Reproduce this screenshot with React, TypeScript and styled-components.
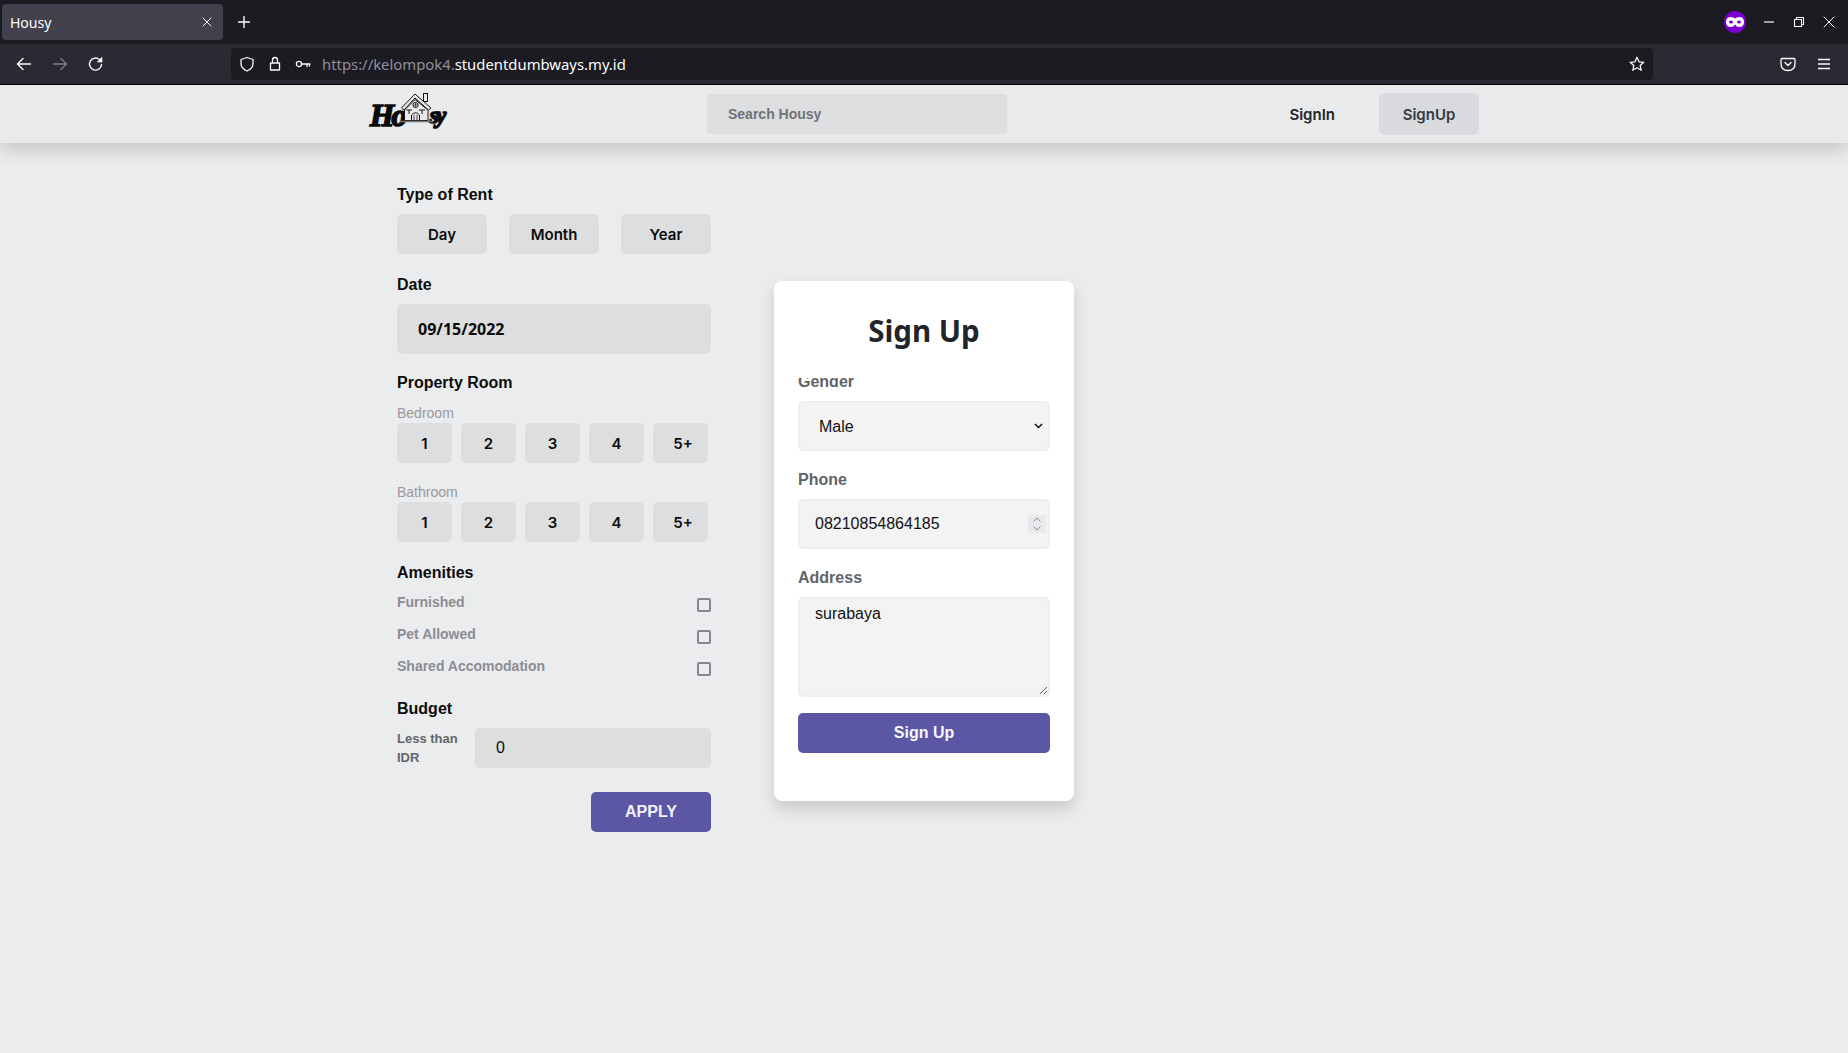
import React from 'react';
import styled, { createGlobalStyle } from 'styled-components';

const GlobalStyle = createGlobalStyle`
  html, body {
    margin: 0;
    padding: 0;
    height: 100%;
    overflow: hidden;
    background-color: #ebecee;
    font-family: "Liberation Sans", Arial, sans-serif;
  }
  * { box-sizing: border-box; }
`;

const CHROME_FONT = '"Noto Sans", "Open Sans", sans-serif';
const BUTTON_FONT = 'Inter, "Noto Sans", sans-serif';

/* browser frame */
const TabStrip = styled.div`
  height: 44px;
  background-color: #1c1b22;
  display: flex;
  align-items: center;
  padding-left: 2px;
  color: #fbfbfe;
`;

const Tab = styled.div`
  width: 221px;
  height: 36px;
  background-color: #42414d;
  border-radius: 4px;
  display: flex;
  align-items: center;
  justify-content: space-between;
  padding: 0 11px 0 8px;
  font-family: ${CHROME_FONT};
  font-size: 14px;
`;

const NewTab = styled.div`
  margin-left: 14px;
  display: flex;
`;

const WindowControls = styled.div`
  margin-left: auto;
  display: flex;
  align-items: center;
  padding-right: 12px;
  gap: 16px;
`;

const PrivateMask = styled.div`
  width: 22px;
  height: 22px;
  border-radius: 50%;
  background-color: #7b00d0;
  display: flex;
  align-items: center;
  justify-content: center;
`;

const Toolbar = styled.div`
  height: 41px;
  background-color: #2b2a33;
  border-bottom: 1px solid #000;
  display: flex;
  align-items: center;
  padding: 0 17px 1px 15px;
  color: #fbfbfe;
`;

const NavIcons = styled.div`
  display: flex;
  align-items: center;
  gap: 18px;
  width: 216px;
`;

const UrlBar = styled.div`
  width: 1422px;
  height: 32px;
  background-color: #1c1b22;
  border-radius: 4px;
  display: flex;
  align-items: center;
  padding: 0 8px;
`;

const UrlIcons = styled.div`
  display: flex;
  align-items: center;
  gap: 13px;
  margin-right: 11px;
`;

const UrlText = styled.div`
  font-family: ${CHROME_FONT};
  font-size: 14.85px;
  color: #fbfbfe;
  flex: 1;
`;

const UrlMuted = styled.span`
  color: #8f8f9d;
`;

const ToolbarRight = styled.div`
  margin-left: auto;
  display: flex;
  align-items: center;
  gap: 21px;
`;

/* site navbar */
const NavBar = styled.nav`
  height: 58px;
  background-color: #e9eaec;
  box-shadow: 0 8px 16px rgba(0, 0, 0, 0.15);
  display: flex;
  align-items: center;
  padding: 0 369px 0 370px;
  position: relative;
`;

const LogoSlot = styled.div`
  width: 337px;
  display: flex;
`;

const Logo = styled.div`
  display: flex;
  align-items: flex-end;
  height: 38px;
  margin-bottom: 5px;
  color: #0a0a0a;
`;

const LogoText = styled.span<{ $size: number }>`
  font-family: "Liberation Serif", serif;
  font-weight: 700;
  font-style: italic;
  font-size: ${p => p.$size}px;
  line-height: 30px;
  letter-spacing: -2.5px;
  -webkit-text-stroke: 1.6px #0a0a0a;
`;

const LogoHouse = styled.svg`
  margin: 0 -4px 0 -5px;
  position: relative;
  align-self: flex-start;
`;

const Search = styled.input`
  width: 300px;
  height: 40px;
  border: none;
  outline: none;
  border-radius: 4px;
  background-color: #dddee0;
  padding: 0 21px;
  font-family: "Liberation Sans", sans-serif;
  font-size: 14px;
  font-weight: 700;

  &::placeholder {
    color: #6f7276;
    opacity: 1;
  }
`;

const NavLinks = styled.div`
  margin-left: auto;
  display: flex;
  align-items: center;
  gap: 44px;
`;

const NavLink = styled.a`
  font-family: ${BUTTON_FONT};
  font-size: 15px;
  font-weight: 600;
  color: #212529;
`;

const NavButton = styled.button`
  width: 100px;
  height: 42px;
  border: none;
  border-radius: 6px;
  background-color: #d8dade;
  font-family: ${BUTTON_FONT};
  font-size: 15px;
  font-weight: 600;
  color: #343a40;
`;

/* page */
const Main = styled.main`
  display: flex;
  align-items: flex-start;
  padding: 39px 0 0 397px;
  gap: 63px;
`;

const Filter = styled.form`
  width: 314px;
  display: flex;
  flex-direction: column;
`;

const SectionTitle = styled.div<{ $top?: number }>`
  height: 24px;
  font-size: 16px;
  font-weight: 700;
  line-height: 26px;
  color: #0c0c0c;
  margin-top: ${p => p.$top ?? 0}px;
`;

const Choices = styled.div<{ $gap: number }>`
  display: flex;
  gap: ${p => p.$gap}px;
  margin-top: 8px;
`;

const Choice = styled.button<{ $width: number; $wide?: boolean }>`
  width: ${p => p.$width}px;
  height: 40px;
  border: none;
  border-radius: 5px;
  background-color: #dddee0;
  font-family: ${BUTTON_FONT};
  font-size: 15px;
  font-weight: 600;
  color: #0c0c0c;
  padding: 1px 0 0 ${p => (p.$wide ? 5 : 0)}px;
`;

const DateField = styled.input`
  width: 100%;
  height: 50px;
  margin-top: 8px;
  border: none;
  outline: none;
  border-radius: 5px;
  background-color: #dddee0;
  padding: 0 21px;
  font-family: "Noto Sans", sans-serif;
  font-size: 16px;
  font-weight: 700;
  color: #0c0c0c;
`;

const SubTitle = styled.div<{ $top: number }>`
  font-size: 14px;
  line-height: 20px;
  height: 20px;
  color: #98999d;
  margin-top: ${p => p.$top}px;
`;

const RoomChoices = styled(Choices)`
  margin-top: 0;
`;

const CheckRow = styled.label<{ $top?: number }>`
  display: flex;
  justify-content: space-between;
  align-items: flex-start;
  height: 32px;
  margin-top: ${p => p.$top ?? 0}px;
  font-size: 14px;
  font-weight: 700;
  line-height: 26px;
  color: #8b8d93;
`;

const Check = styled.input`
  appearance: none;
  width: 14px;
  height: 14px;
  margin: 9px 0 0;
  background-color: #ebecee;
  border: 2px solid #85858f;
  border-radius: 2px;
`;

const BudgetRow = styled.div`
  display: flex;
  align-items: center;
  margin-top: 8px;
`;

const BudgetLabel = styled.div`
  width: 78px;
  font-size: 13px;
  font-weight: 700;
  line-height: 19px;
  color: #63666b;
`;

const BudgetField = styled.input`
  width: 236px;
  height: 40px;
  border: none;
  outline: none;
  border-radius: 5px;
  background-color: #dddee0;
  padding: 0 21px;
  font-family: "Liberation Sans", sans-serif;
  font-size: 16px;
  color: #0c0c0c;
`;

const ApplyButton = styled.button`
  align-self: flex-end;
  width: 120px;
  height: 40px;
  margin-top: 24px;
  border: none;
  border-radius: 5px;
  background-color: #5c57a5;
  color: #f2f2f8;
  font-family: "Liberation Sans", sans-serif;
  font-size: 16px;
  font-weight: 700;
`;

/* sign up modal */
const Card = styled.section`
  width: 300px;
  height: 520px;
  margin-top: 99px;
  padding: 24px 24px 48px;
  background-color: #fff;
  border-radius: 8px;
  box-shadow: 0 8px 16px rgba(0, 0, 0, 0.15);
  display: flex;
  flex-direction: column;
`;

const CardTitle = styled.h2`
  margin: 0 0 19px;
  height: 54px;
  flex-shrink: 0;
  font-family: "Noto Sans", sans-serif;
  font-size: 29.5px;
  font-weight: 700;
  line-height: 52px;
  text-align: center;
  color: #212529;
`;

const CardBody = styled.div`
  height: 375px;
  flex-shrink: 0;
  overflow: hidden;
  display: flex;
  flex-direction: column;
  justify-content: flex-end;
`;

const FieldLabel = styled.label<{ $top?: number }>`
  display: block;
  flex-shrink: 0;
  height: 24px;
  margin: ${p => p.$top ?? 0}px 0 8px;
  font-size: 16px;
  font-weight: 700;
  line-height: 26px;
  color: #5f646b;
`;

const fieldBase = `
  width: 100%;
  flex-shrink: 0;
  border: 2px solid #eeeeee;
  border-radius: 5px;
  background-color: #f3f3f3;
  outline: none;
  font-family: "Liberation Sans", sans-serif;
  font-size: 16px;
  color: #111;
`;

const FieldBox = styled.div`
  position: relative;
  flex-shrink: 0;
`;

const SelectField = styled.select`
  ${fieldBase}
  display: block;
  height: 50px;
  appearance: none;
  padding: 0 19px;
`;

const SelectArrow = styled.svg`
  position: absolute;
  right: 7px;
  top: 22px;
  pointer-events: none;
`;

const PhoneField = styled.input`
  ${fieldBase}
  display: block;
  height: 50px;
  padding: 0 15px;
`;

const Spinner = styled.svg`
  position: absolute;
  right: 4px;
  top: 16px;
  background-color: #e9e9ed;
`;

const AddressField = styled.textarea`
  ${fieldBase}
  display: block;
  height: 100px;
  padding: 5px 15px;
  line-height: 20px;
  resize: vertical;
`;

const SubmitButton = styled.button`
  width: 100%;
  height: 40px;
  flex-shrink: 0;
  margin-top: 16px;
  border: none;
  border-radius: 5px;
  background-color: #5c57a5;
  color: #f5f5fa;
  font-family: "Liberation Sans", sans-serif;
  font-size: 16px;
  font-weight: 700;
`;

const Ico: React.FC<{ w?: number; h?: number; children: React.ReactNode; op?: number }> = ({ w = 16, h = 16, children, op = 1 }) => (
  <svg width={w} height={h} viewBox={`0 0 ${w} ${h}`} fill="none" stroke="currentColor" strokeWidth={1.3} strokeLinecap="round" strokeLinejoin="round" opacity={op}>
    {children}
  </svg>
);

const HouseIcon = () => (
  <LogoHouse width="34" height="31" viewBox="0 0 34 31" fill="#e9eaec" stroke="#151515" strokeWidth="1">
    <rect x="23.5" y="0.5" width="4" height="8" />
    <path d="M1.5 15 L15 1 L31 15 L28.5 17 L15 5 L4 17 Z" />
    <path d="M4.5 17 L15 6.5 L28 17 V27.5 H4.5 Z" />
    <circle cx="15.5" cy="12" r="2.6" />
    <path d="M13.5 12 H17.5 M15.5 10 V14" strokeWidth="0.7" />
    <path d="M6.5 17 H12 M9 17 V21 M19 17 H25 M22 17 V21" />
    <path d="M11.5 27.5 V22 Q15.5 17.5 19.5 22 V27.5 Z" />
    <path d="M14 27.5 V22 M17 27.5 V22" strokeWidth="0.8" />
    <path d="M0 28.5 H33" strokeWidth="1.3" stroke="#777" />
  </LogoHouse>
);

const App: React.FC = () => {
  return (
    <>
      <GlobalStyle />
      <TabStrip>
        <Tab>
          Housy
          <Ico w={10} h={10}><path d="M1 1 L9 9 M9 1 L1 9" strokeWidth="1" /></Ico>
        </Tab>
        <NewTab>
          <Ico w={14} h={14}><path d="M7 1.5 V12.5 M1.5 7 H12.5" strokeWidth="1.4" /></Ico>
        </NewTab>
        <WindowControls>
          <PrivateMask>
            <svg width="18" height="10" viewBox="0 0 18 10">
              <path fillRule="evenodd" fill="#fff" d="M5 0 Q7.5 0 9 1.5 Q10.5 0 13 0 Q18 0 18 5 Q18 10 13 10 Q10.5 10 9 7.5 Q7.5 10 5 10 Q0 10 0 5 Q0 0 5 0 Z M5 3.5 Q3 3.5 3 5 Q3 6.5 5 6.5 Q7 6.5 7 5 Q7 3.5 5 3.5 Z M13 3.5 Q11 3.5 11 5 Q11 6.5 13 6.5 Q15 6.5 15 5 Q15 3.5 13 3.5 Z" />
            </svg>
          </PrivateMask>
          <Ico w={14} h={12}><path d="M2 6 H12" strokeWidth="1.2" strokeLinecap="butt" /></Ico>
          <Ico w={14} h={12}><path d="M4.5 3 V1.5 H11.5 V8.5 H10 M2.5 3.5 H9.5 V10.5 H2.5 Z" strokeWidth="1.1" /></Ico>
          <Ico w={14} h={12}><path d="M2 1 L12 11 M12 1 L2 11" strokeWidth="1" /></Ico>
        </WindowControls>
      </TabStrip>
      <Toolbar>
        <NavIcons>
          <Ico w={18} h={16}><path d="M15.5 8 H3 M8 2.5 L2.5 8 L8 13.5" strokeWidth="1.4" /></Ico>
          <Ico w={18} h={16} op={0.4}><path d="M2.5 8 H15 M10 2.5 L15.5 8 L10 13.5" strokeWidth="1.4" /></Ico>
          <Ico w={18} h={16}><path d="M14.5 8.5 A6 6 0 1 1 12.5 3.6 L14.5 5.4" strokeWidth="1.4" /><path d="M15 1.5 V6 H10.5 Z" fill="currentColor" strokeWidth="0.6" /></Ico>
        </NavIcons>
        <UrlBar>
          <UrlIcons>
            <Ico w={16} h={16}><path d="M8 1.5 L14 3.5 V7.5 Q14 12.5 8 15 Q2 12.5 2 7.5 V3.5 Z" /></Ico>
            <Ico w={14} h={16}><path d="M4.5 7 V4 A2.5 2.5 0 0 1 9.5 4 V7 M2.5 7 H11.5 V14 H2.5 Z" /></Ico>
            <Ico w={16} h={16}><circle cx="4" cy="8" r="2.6" /><path d="M6.6 8 H15 M12 8 V10.5 M14.5 8 V10" /></Ico>
          </UrlIcons>
          <UrlText><UrlMuted>https://kelompok4.</UrlMuted>studentdumbways.my.id</UrlText>
          <Ico w={16} h={16}><path d="M8 1.3 L10 5.8 L14.8 6.3 L11.2 9.5 L12.2 14.3 L8 11.8 L3.8 14.3 L4.8 9.5 L1.2 6.3 L6 5.8 Z" /></Ico>
        </UrlBar>
        <ToolbarRight>
          <Ico w={16} h={16}><path d="M2 2.5 H14 Q15 2.5 15 3.5 V7.5 Q15 14.5 8 14.5 Q1 14.5 1 7.5 V3.5 Q1 2.5 2 2.5 Z M5 6.5 L8 9.5 L11 6.5" /></Ico>
          <Ico w={14} h={14}><path d="M1 2.5 H13 M1 7 H13 M1 11.5 H13" strokeLinecap="butt" strokeWidth="1.4" /></Ico>
        </ToolbarRight>
      </Toolbar>

      <NavBar>
        <LogoSlot>
          <Logo>
            <LogoText $size={31}>Ho</LogoText>
            <HouseIcon />
            <LogoText $size={23}>sy</LogoText>
          </Logo>
        </LogoSlot>
        <Search placeholder="Search Housy" />
        <NavLinks>
          <NavLink>SignIn</NavLink>
          <NavButton>SignUp</NavButton>
        </NavLinks>
      </NavBar>

      <Main>
        <Filter>
          <SectionTitle>Type of Rent</SectionTitle>
          <Choices $gap={22}>
            {['Day', 'Month', 'Year'].map(t => (
              <Choice key={t} type="button" $width={90}>{t}</Choice>
            ))}
          </Choices>

          <SectionTitle $top={18}>Date</SectionTitle>
          <DateField defaultValue="09/15/2022" />

          <SectionTitle $top={16}>Property Room</SectionTitle>
          <SubTitle $top={9}>Bedroom</SubTitle>
          <RoomChoices $gap={9}>
            {['1', '2', '3', '4', '5+'].map(t => (
              <Choice key={t} type="button" $width={55} $wide={t === '5+'}>{t}</Choice>
            ))}
          </RoomChoices>
          <SubTitle $top={19}>Bathroom</SubTitle>
          <RoomChoices $gap={9}>
            {['1', '2', '3', '4', '5+'].map(t => (
              <Choice key={t} type="button" $width={55} $wide={t === '5+'}>{t}</Choice>
            ))}
          </RoomChoices>

          <SectionTitle $top={18}>Amenities</SectionTitle>
          <CheckRow $top={5}>Furnished<Check type="checkbox" /></CheckRow>
          <CheckRow>Pet Allowed<Check type="checkbox" /></CheckRow>
          <CheckRow>Shared Accomodation<Check type="checkbox" /></CheckRow>

          <SectionTitle $top={11}>Budget</SectionTitle>
          <BudgetRow>
            <BudgetLabel>Less than IDR</BudgetLabel>
            <BudgetField defaultValue="0" />
          </BudgetRow>
          <ApplyButton type="button">APPLY</ApplyButton>
        </Filter>

        <Card>
          <CardTitle>Sign Up</CardTitle>
          <CardBody>
            <FieldLabel>Gender</FieldLabel>
            <FieldBox>
              <SelectField defaultValue="Male">
                <option>Male</option>
                <option>Female</option>
              </SelectField>
              <SelectArrow width="9" height="6" viewBox="0 0 9 6" fill="none" stroke="#111" strokeWidth="1.5">
                <path d="M1 1 L4.5 4.5 L8 1" />
              </SelectArrow>
            </FieldBox>
            <FieldLabel $top={16}>Phone</FieldLabel>
            <FieldBox>
              <PhoneField defaultValue="08210854864185" />
              <Spinner width="18" height="18" viewBox="0 0 18 18" fill="none" stroke="#8a8a92" strokeWidth="1">
                <path d="M5.5 6.5 L9 3 L12.5 6.5 M5.5 11.5 L9 15 L12.5 11.5" />
              </Spinner>
            </FieldBox>
            <FieldLabel $top={16}>Address</FieldLabel>
            <AddressField defaultValue="surabaya" />
            <SubmitButton type="button">Sign Up</SubmitButton>
          </CardBody>
        </Card>
      </Main>
    </>
  );
};

export default App;
